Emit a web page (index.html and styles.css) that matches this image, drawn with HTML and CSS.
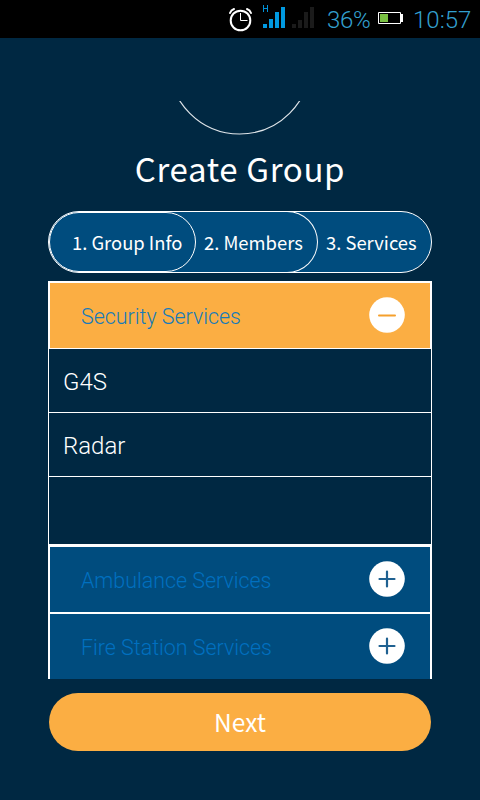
FILE: index.html
```html
<!DOCTYPE html>
<html lang="en">
<head>
<meta charset="utf-8">
<title>Create Group</title>
<link rel="stylesheet" href="styles.css">
</head>
<body>
<header class="status">
  <svg class="status-icons" width="92" height="38" viewBox="0 0 92 38" fill="none">
    <circle cx="12.5" cy="20.5" r="9.8" stroke="#fff" stroke-width="2"/>
    <path d="M12.500 13v7.500h7" stroke="#fff"/>
    <path d="M2 13q1-3 4-4M23 13q-1-3-4-4" stroke="#fff" stroke-width="2" stroke-linecap="round"/>
    <path d="M35.500 5v7M39.500 5v7M35.500 8.500h4" stroke="#0092d8"/>
    <path d="M35 24h4v4h-4zM41 19h4v9h-4zM47 12h4v16h-4zM53 7h4v21h-4z" fill="#0099e0"/>
    <path d="M64 24h4v4h-4zM70 20h4v8h-4zM76 12h4v16h-4zM82 7h4v21h-4z" fill="#1b1b1b"/>
  </svg>
  <span class="percent">36%</span>
  <svg class="battery" width="26" height="14" viewBox="0 0 26 14">
    <path d="M.5 1.500h22v11H.5z" fill="none" stroke="#fff"/>
    <path d="M23 3h2v8h-2z" fill="#fff"/>
    <path d="M2 3h8v8H2z" fill="#7ac143"/>
  </svg>
  <span class="clock">10:57</span>
</header>
<main>
  <svg class="arc" width="124" height="34" viewBox="0 0 124 34">
    <circle cx="61.700" cy="-37.500" r="70.500" fill="none" stroke="#dfe5e9" stroke-width="1.200"/>
  </svg>
  <h1>Create Group</h1>
  <nav class="steps">
    <div class="step step-info"><span>1. Group Info</span></div>
    <div class="step step-members"><span>2. Members</span></div>
    <div class="step step-services"><span>3. Services</span></div>
  </nav>
  <section class="accordion">
    <div class="head open">
      <span>Security Services</span>
      <svg width="36" height="36" viewBox="0 0 36 36"><circle cx="18" cy="18" r="17.800" fill="#fff"/><path d="M10 18.500h16" stroke="#f5a02c" stroke-width="2" stroke-linecap="round"/></svg>
    </div>
    <ul>
      <li>G4S</li>
      <li>Radar</li>
      <li></li>
    </ul>
    <div class="head">
      <span>Ambulance Services</span>
      <svg width="36" height="36" viewBox="0 0 36 36"><circle cx="18" cy="18" r="17.800" fill="#fff"/><path d="M10.500 18h15M18 10.500v15" stroke="#1f6191" stroke-width="2.200" stroke-linecap="round"/></svg>
    </div>
    <div class="head">
      <span>Fire Station Services</span>
      <svg width="36" height="36" viewBox="0 0 36 36"><circle cx="18" cy="18" r="17.800" fill="#fff"/><path d="M10.500 18h15M18 10.500v15" stroke="#1f6191" stroke-width="2.200" stroke-linecap="round"/></svg>
    </div>
  </section>
  <button class="next">Next</button>
</main>
</body>
</html>
```
FILE: styles.css
```css
* { box-sizing: border-box; }
body {
  margin: 0;
  width: 480px;
  height: 800px;
  overflow: hidden;
  background: #002842;
  color: #fff;
  font-family: "Noto Sans CJK SC", sans-serif;
}
.status {
  height: 38px;
  display: flex;
  align-items: center;
  padding-left: 228px;
  background: #000;
  color: #33a0d0;
  font: 300 24px/38px Roboto, sans-serif;
  white-space: nowrap;
}
.status-icons { flex: none; }
.percent { width: 51px; margin-left: 7px; padding-top: 2px; letter-spacing: -0.3px; }
.battery { flex: none; margin-top: -2px; }
.clock { margin-left: 9px; padding-top: 2px; }
main {
  display: flex;
  flex-direction: column;
  padding: 63px 48px 0;
}
.arc { align-self: center; }
h1 {
  margin: 8px 0 0;
  height: 68px;
  line-height: 50px;
  font-size: 33px;
  font-weight: 400;
  letter-spacing: 0.65px;
  text-align: center;
}
.steps {
  height: 62px;
  display: flex;
  border: 1px solid #fff;
  border-radius: 31px;
  background: #004c7e;
  font-size: 18.4px;
  line-height: 60px;
  white-space: nowrap;
}
.step-info {
  width: 147px;
  height: 60px;
  padding-left: 22px;
  line-height: 58px;
  border: 1px solid #fff;
  border-radius: 30px;
}
.step-members {
  width: 122px;
  height: 62px;
  margin-top: -1px;
  padding-left: 8px;
  border: 1px solid #fff;
  border-left: 0;
  border-radius: 0 31px 31px 0;
}
.step-services { padding-left: 8px; }
.accordion {
  margin-top: 8px;
  height: 398px;
  font-family: Roboto, sans-serif;
  font-weight: 300;
}
.head {
  height: 67px;
  display: flex;
  align-items: center;
  justify-content: space-between;
  padding: 0 25px 2px 31px;
  border: 2px solid #fff;
  border-bottom: 0;
  background: #004c7e;
  color: #0070c0;
  font-size: 21.4px;
}
.head span { padding-top: 3px; }
.open { background: #fbae43; color: #177bb8; }
ul {
  margin: 0;
  padding: 0;
  height: 197px;
  list-style: none;
  border: 1px solid #fff;
}
li {
  height: 64px;
  padding: 2px 14px 0;
  border-bottom: 1px solid #fff;
  font-size: 24px;
  line-height: 62px;
}
li:last-child { border: 0; }
.next {
  margin: 14px 1px 0;
  height: 58px;
  padding: 0;
  border: 0;
  border-radius: 29px;
  background: #fbae43;
  color: #fff;
  font: 400 24.5px/58px "Noto Sans CJK SC", sans-serif;
}
```
